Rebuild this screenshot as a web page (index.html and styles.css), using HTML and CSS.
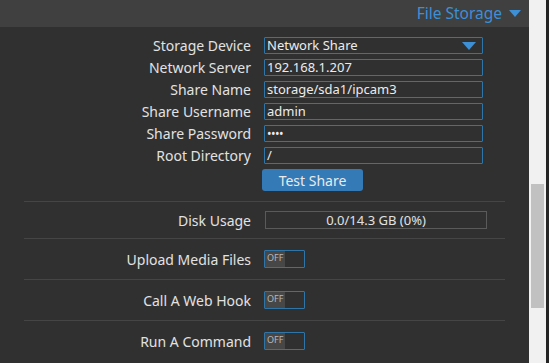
FILE: index.html
```html
<!DOCTYPE html>
<html lang="en">
<head>
    <meta charset="UTF-8">
    <title>File Storage</title>
    <link rel="stylesheet" href="styles.css">
</head>
<body>
    <div class="page">
        <div class="main">
            <div class="header">
                <span class="header-title">File Storage</span>
                <span class="header-arrow"></span>
            </div>
            <div class="form">
                <div class="row">
                    <label class="label">Storage Device</label>
                    <div class="select">
                        <span>Network Share</span>
                        <span class="select-arrow"></span>
                    </div>
                </div>
                <div class="row">
                    <label class="label">Network Server</label>
                    <div class="field">192.168.1.207</div>
                </div>
                <div class="row">
                    <label class="label">Share Name</label>
                    <div class="field">storage/sda1/ipcam3</div>
                </div>
                <div class="row">
                    <label class="label">Share Username</label>
                    <div class="field">admin</div>
                </div>
                <div class="row">
                    <label class="label">Share Password</label>
                    <div class="field password">&bull;&bull;&bull;&bull;</div>
                </div>
                <div class="row">
                    <label class="label">Root Directory</label>
                    <div class="field">/</div>
                </div>
                <div class="button-row">
                    <button class="button">Test Share</button>
                </div>
            </div>
            <div class="section disk">
                <span class="label">Disk Usage</span>
                <div class="usage">0.0/14.3 GB (0%)</div>
            </div>
            <div class="section">
                <span class="label">Upload Media Files</span>
                <div class="toggle"><span class="toggle-off">OFF</span></div>
            </div>
            <div class="section">
                <span class="label">Call A Web Hook</span>
                <div class="toggle"><span class="toggle-off">OFF</span></div>
            </div>
            <div class="section">
                <span class="label">Run A Command</span>
                <div class="toggle"><span class="toggle-off">OFF</span></div>
            </div>
        </div>
        <div class="scrollbar">
            <div class="scroll-thumb"></div>
        </div>
        <div class="edge"></div>
    </div>
</body>
</html>
```

FILE: styles.css
```css
body {
    margin: 0;
    font-family: "Noto Sans", "Open Sans", sans-serif;
    font-size: 14px;
    color: #e2e2e2;
    background: #303030;
}
.page {
    display: flex;
    height: 363px;
    overflow: hidden;
}
.main {
    width: 529px;
    background: #303030;
}
.header {
    height: 27px;
    background: #404040;
    display: flex;
    justify-content: flex-end;
    align-items: center;
    padding-right: 8px;
    box-sizing: border-box;
}
.header-title {
    color: #3d8fd6;
    font-size: 15.5px;
    line-height: 25px;
}
.header-arrow {
    width: 0;
    height: 0;
    margin-left: 7px;
    border-left: 6px solid transparent;
    border-right: 6px solid transparent;
    border-top: 7px solid #3d8fd6;
}
.form {
    padding-top: 10px;
}
.row {
    display: flex;
    align-items: flex-start;
    height: 22px;
}
.label {
    width: 264px;
    padding-right: 13px;
    box-sizing: border-box;
    text-align: right;
    flex-shrink: 0;
    white-space: nowrap;
    line-height: 17px;
}
.field,
.select {
    width: 219px;
    height: 17px;
    box-sizing: border-box;
    border: 1px solid #2f75a8;
    border-radius: 1px;
    padding: 0 2px;
    font-size: 13px;
    line-height: 15px;
    color: #ececec;
}
.select {
    display: flex;
    justify-content: space-between;
    align-items: center;
}
.select-arrow {
    width: 0;
    height: 0;
    margin-right: 4px;
    border-left: 7px solid transparent;
    border-right: 7px solid transparent;
    border-top: 8px solid #3d8fd6;
}
.password {
    font-size: 12px;
    letter-spacing: -0.5px;
}
.button-row {
    padding-left: 262px;
    height: 32px;
}
.button {
    width: 101px;
    height: 22px;
    background: #337ab7;
    border: none;
    border-radius: 3px;
    color: #eaeaea;
    font-family: inherit;
    font-size: 14px;
    padding: 0;
}
.section {
    margin: 0 24px;
    height: 40px;
    border-top: 1px solid #454545;
    display: flex;
    align-items: center;
}
.section .label {
    width: 240px;
}
.disk {
    height: 36px;
}
.usage {
    width: 222px;
    height: 18px;
    box-sizing: border-box;
    border: 1px solid #5a5a5a;
    margin-left: 1px;
    text-align: center;
    font-size: 13px;
    line-height: 16px;
}
.toggle {
    width: 41px;
    height: 18px;
    box-sizing: border-box;
    border: 1px solid #2f75a8;
    border-radius: 1px;
    display: flex;
}
.toggle-off {
    width: 20px;
    background: #474747;
    color: #b8b8b8;
    font-size: 9px;
    line-height: 13px;
    padding-left: 2px;
    box-sizing: border-box;
}
.scrollbar {
    width: 17px;
    background: #f1f1f1;
}
.scroll-thumb {
    margin: 184px 2px 0 2px;
    height: 124px;
    background: #c1c1c1;
}
.edge {
    width: 3px;
    background: #242424;
}
```
